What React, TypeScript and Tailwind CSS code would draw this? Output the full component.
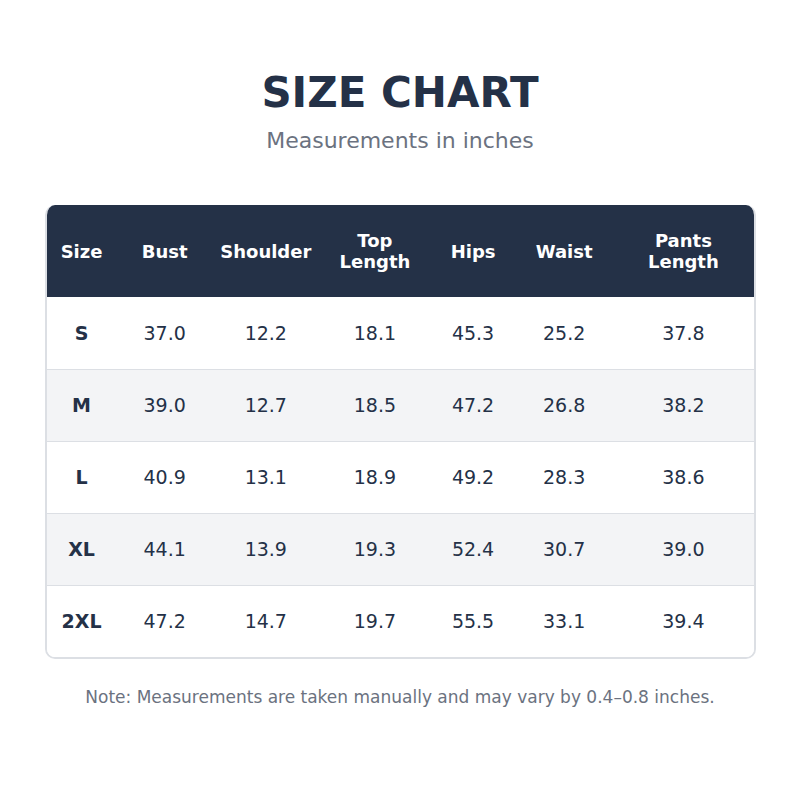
import React from 'react';

const headers = ['Size', 'Bust', 'Shoulder', 'Top Length', 'Hips', 'Waist', 'Pants Length'];
const widths = ['w-[70px]', 'w-[96px]', 'w-[106px]', 'w-[112px]', 'w-[84px]', 'w-[98px]', 'w-[140px]'];

const rows = [
  ['S', '37.0', '12.2', '18.1', '45.3', '25.2', '37.8'],
  ['M', '39.0', '12.7', '18.5', '47.2', '26.8', '38.2'],
  ['L', '40.9', '13.1', '18.9', '49.2', '28.3', '38.6'],
  ['XL', '44.1', '13.9', '19.3', '52.4', '30.7', '39.0'],
  ['2XL', '47.2', '14.7', '19.7', '55.5', '33.1', '39.4'],
];

const App: React.FC = () => {
  return (
    <div className="w-[800px] h-[800px] bg-white flex flex-col items-center font-['DejaVu_Sans',sans-serif] text-[#243147]">
      <h1 className="mt-[69px] text-[42px] leading-[48px] font-bold">SIZE CHART</h1>
      <p className="mt-[9px] text-[22px] leading-[30px] text-[#6b7280]">Measurements in inches</p>

      <div className="mt-[49px] w-[711px] rounded-[10px] border-2 border-t-0 border-[#dcdfe4] overflow-hidden">
        <table className="w-full table-fixed border-collapse">
          <thead>
            <tr className="bg-[#243147] text-white h-[92px]">
              {headers.map((h, i) => (
                <th key={h} className={`${widths[i]} text-[18px] leading-[21px] font-bold text-center px-1`}>
                  {h.includes(' ') ? (
                    <>
                      {h.split(' ')[0]}
                      <br />
                      {h.split(' ')[1]}
                    </>
                  ) : h}
                </th>
              ))}
            </tr>
          </thead>
          <tbody>
            {rows.map((r, ri) => (
              <tr
                key={r[0]}
                className={`h-[72px] ${ri % 2 === 1 ? 'bg-[#f3f4f6]' : 'bg-white'} ${ri < rows.length - 1 ? 'border-b border-[#dcdfe4]' : ''}`}
              >
                {r.map((c, ci) => (
                  <td key={ci} className={`text-center text-[19px] ${ci === 0 ? 'font-bold' : ''}`}>
                    {c}
                  </td>
                ))}
              </tr>
            ))}
          </tbody>
        </table>
      </div>

      <p className="mt-[26px] text-[17px] leading-[24px] text-[#6b7280]">
        Note: Measurements are taken manually and may vary by 0.4–0.8 inches.
      </p>
    </div>
  );
};

export default App;
